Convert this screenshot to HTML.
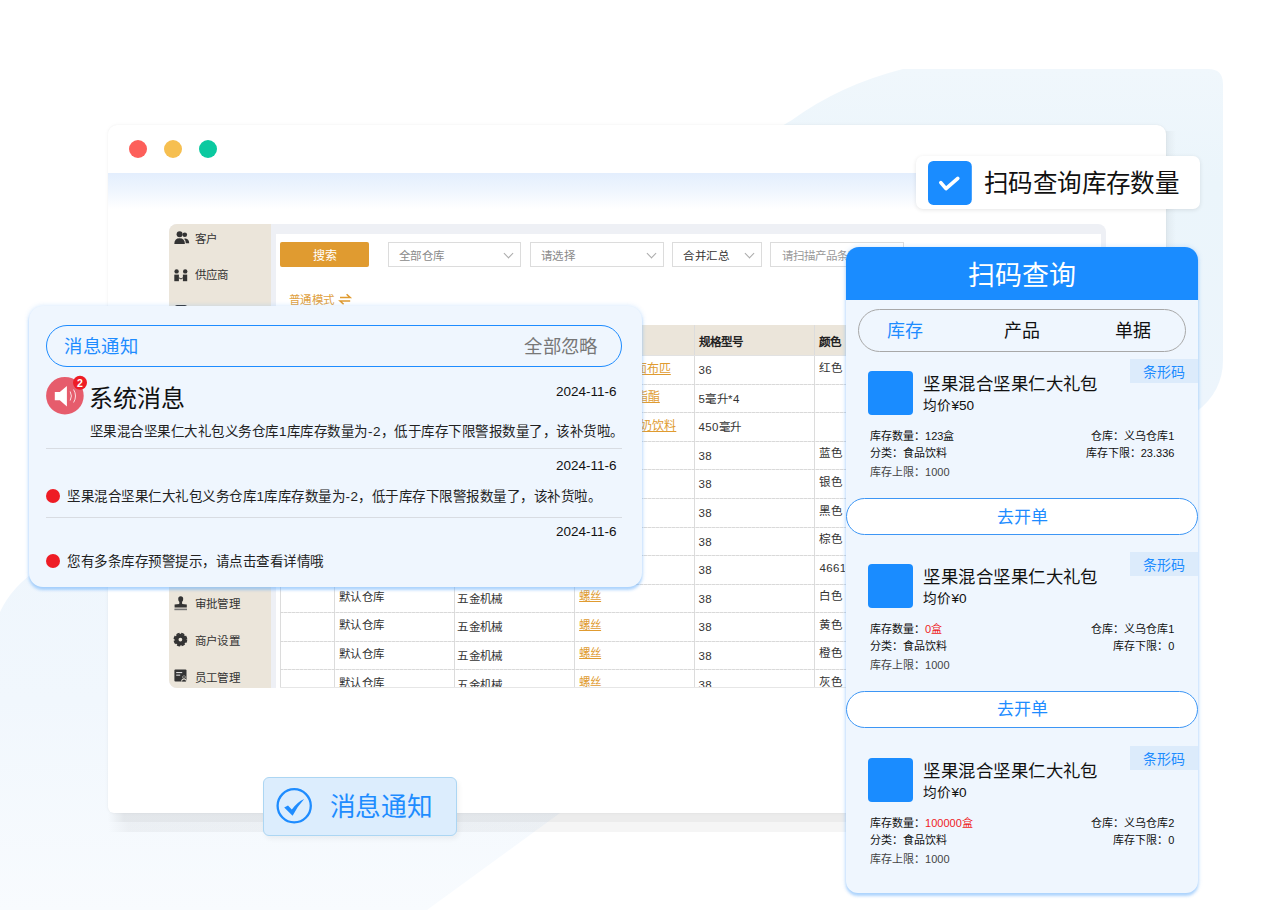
<!DOCTYPE html>
<html lang="zh-CN"><head><meta charset="utf-8">
<style>
*{box-sizing:border-box;margin:0;padding:0}
html,body{width:1262px;height:910px;overflow:hidden;background:#fff}
body{position:relative;font-family:"Liberation Sans",sans-serif;color:#222}
.a{position:absolute}
.t{position:absolute;white-space:nowrap;line-height:1}
.dd{position:absolute;top:242px;height:25px;border:1px solid #dcdcdc;background:#fff}
.chev{position:absolute;width:7px;height:7px;border-right:1px solid #aaa;border-bottom:1px solid #aaa;transform:rotate(45deg)}
</style></head><body>

<svg class="a" style="left:0;top:0" width="1262" height="910" viewBox="0 0 1262 910">
<defs>
<linearGradient id="bgg" x1="0" y1="0" x2="0" y2="910" gradientUnits="userSpaceOnUse">
<stop offset="0.075" stop-color="#f0f7fc"/><stop offset="0.2" stop-color="#ebf5fb"/><stop offset="0.45" stop-color="#edf5fc"/><stop offset="0.77" stop-color="#f1f7fd"/><stop offset="1" stop-color="#f8fbfe"/>
</linearGradient>
</defs>
<path d="M903 69 L1208 69 Q1223 69 1223 84 L1223 360 Q1223 392 1196 412 L560 813 L427 910 L0 910 L0 612 Q12 586 40 568 L792 120 Q840 85 903 69 Z" fill="url(#bgg)"/>
</svg>
<div class="a" style="left:108px;top:813px;width:1058px;height:9px;background:linear-gradient(to right,rgba(0,0,0,0),rgba(0,0,0,0.075) 16px)"></div>
<div class="a" style="left:108px;top:822px;width:1058px;height:10px;background:linear-gradient(to right,rgba(0,0,0,0),rgba(0,0,0,0.038) 20px)"></div>
<div class="a" style="left:1160px;top:131px;width:16px;height:682px;background:linear-gradient(to right,rgba(0,0,0,0.07),rgba(0,0,0,0.0))"></div>
<div class="a" style="left:108px;top:125px;width:1058px;height:688px;background:#fff;border-radius:9px 9px 6px 6px;box-shadow:0 0 1.5px rgba(0,0,0,0.06),0 0 4px rgba(0,0,0,0.04);overflow:hidden">
  <div class="a" style="left:0;top:48px;width:100%;height:36px;background:linear-gradient(#e3eefd,#eef5fe 45%,#fff)"></div>
  <div class="a" style="left:20.6px;top:14.8px;width:18px;height:18px;border-radius:50%;background:#fd5f5a"></div>
  <div class="a" style="left:55.9px;top:14.8px;width:18px;height:18px;border-radius:50%;background:#f6bf50"></div>
  <div class="a" style="left:91.1px;top:14.8px;width:18px;height:18px;border-radius:50%;background:#0bc9a0"></div>
</div>
<div class="a" style="left:169px;top:223.6px;width:937px;height:464px;background:#eef0f5;border-radius:8px 8px 0 8px"></div>
<div class="a" style="left:169px;top:223.6px;width:102.2px;height:464px;background:#ebe5da;border-radius:8px 0 0 8px"></div>
<div class="a" style="left:275.8px;top:234px;width:825px;height:453.5px;background:#fff"></div>
<div class="a" style="left:280.2px;top:242px;width:88.6px;height:25px;background:#e09b30;border-radius:2px"></div>
<div class="t" style="left:24.5px;width:600px;text-align:center;top:249.8px;font-size:12px;color:#fff;font-weight:normal;">搜索</div>
<div class="dd" style="left:387.6px;width:133.1px"></div>
<div class="chev" style="left:504.7px;top:250px"></div>
<div class="t" style="left:398.6px;top:250.6px;font-size:11.5px;color:#8a8a8a;font-weight:normal;letter-spacing:0.5px">全部仓库</div>
<div class="dd" style="left:529.8px;width:133.8px"></div>
<div class="chev" style="left:647.6px;top:250px"></div>
<div class="t" style="left:540.8px;top:250.6px;font-size:11.5px;color:#8a8a8a;font-weight:normal;letter-spacing:0.5px">请选择</div>
<div class="dd" style="left:672.4px;width:89.3px"></div>
<div class="chev" style="left:745.7px;top:250px"></div>
<div class="t" style="left:683.4px;top:250.6px;font-size:11.5px;color:#333;font-weight:normal;letter-spacing:0.5px">合并汇总</div>
<div class="dd" style="left:770px;width:133.6px"></div>
<div class="t" style="left:781.7px;top:250.6px;font-size:11.5px;color:#999;font-weight:normal;">请扫描产品条码</div>
<div class="t" style="left:289.0px;top:294.6px;font-size:11.5px;color:#e0a040;font-weight:normal;letter-spacing:0.4px">普通模式</div>
<svg class="a" style="left:336px;top:290px" width="20" height="20" viewBox="336 290 20 20"><path d="M340 297.6 L350.2 297.6 L346.6 294.3" stroke="#e09b30" stroke-width="1.5" fill="none" stroke-linejoin="miter"/><path d="M350.2 300.9 L340 300.9 L343.6 304.3" stroke="#e09b30" stroke-width="1.5" fill="none"/></svg>
<div class="a" style="left:280.4px;top:325.3px;width:600px;height:30.2px;background:#ebe5da"></div>
<div class="a" style="left:279.9px;top:325.3px;width:1px;height:362.2px;background:#dcdcdc"></div>
<div class="a" style="left:334.2px;top:325.3px;width:1px;height:362.2px;background:#dcdcdc"></div>
<div class="a" style="left:453.8px;top:325.3px;width:1px;height:362.2px;background:#dcdcdc"></div>
<div class="a" style="left:574.3px;top:325.3px;width:1px;height:362.2px;background:#dcdcdc"></div>
<div class="a" style="left:694.1px;top:325.3px;width:1px;height:362.2px;background:#dcdcdc"></div>
<div class="a" style="left:813.9px;top:325.3px;width:1px;height:362.2px;background:#dcdcdc"></div>
<div class="a" style="left:280.4px;top:383.6px;width:600px;height:1px;background:repeating-linear-gradient(90deg,#d9d9d9 0 3px,#e9e9e9 3px 4px)"></div>
<div class="a" style="left:280.4px;top:412.2px;width:600px;height:1px;background:repeating-linear-gradient(90deg,#d9d9d9 0 3px,#e9e9e9 3px 4px)"></div>
<div class="a" style="left:280.4px;top:440.7px;width:600px;height:1px;background:repeating-linear-gradient(90deg,#d9d9d9 0 3px,#e9e9e9 3px 4px)"></div>
<div class="a" style="left:280.4px;top:469.3px;width:600px;height:1px;background:repeating-linear-gradient(90deg,#d9d9d9 0 3px,#e9e9e9 3px 4px)"></div>
<div class="a" style="left:280.4px;top:497.9px;width:600px;height:1px;background:repeating-linear-gradient(90deg,#d9d9d9 0 3px,#e9e9e9 3px 4px)"></div>
<div class="a" style="left:280.4px;top:526.5px;width:600px;height:1px;background:repeating-linear-gradient(90deg,#d9d9d9 0 3px,#e9e9e9 3px 4px)"></div>
<div class="a" style="left:280.4px;top:555.1px;width:600px;height:1px;background:repeating-linear-gradient(90deg,#d9d9d9 0 3px,#e9e9e9 3px 4px)"></div>
<div class="a" style="left:280.4px;top:583.6px;width:600px;height:1px;background:repeating-linear-gradient(90deg,#d9d9d9 0 3px,#e9e9e9 3px 4px)"></div>
<div class="a" style="left:280.4px;top:612.2px;width:600px;height:1px;background:repeating-linear-gradient(90deg,#d9d9d9 0 3px,#e9e9e9 3px 4px)"></div>
<div class="a" style="left:280.4px;top:640.8px;width:600px;height:1px;background:repeating-linear-gradient(90deg,#d9d9d9 0 3px,#e9e9e9 3px 4px)"></div>
<div class="a" style="left:280.4px;top:669.4px;width:600px;height:1px;background:repeating-linear-gradient(90deg,#d9d9d9 0 3px,#e9e9e9 3px 4px)"></div>
<div class="a" style="left:280.4px;top:355.0px;width:600px;height:1px;background:#e2e2e2"></div>
<div class="a" style="left:280.4px;top:687px;width:825px;height:1px;background:#e6e6e6"></div>
<div class="t" style="left:698.5px;top:336.6px;font-size:11.5px;color:#222;font-weight:bold;">规格型号</div>
<div class="t" style="left:819.4px;top:336.6px;font-size:11.5px;color:#222;font-weight:bold;">颜色</div>
<div class="a" style="left:0;top:0;width:845px;height:687px;overflow:hidden">
<div class="t" style="left:698.5px;top:365.1px;font-size:11.5px;color:#333;font-weight:normal;letter-spacing:0.4px">36</div>
<div class="t" style="left:819.4px;top:362.6px;font-size:11.5px;color:#333;font-weight:normal;letter-spacing:0.4px">红色</div>
<div class="t" style="left:698.5px;top:393.7px;font-size:11.5px;color:#333;font-weight:normal;letter-spacing:0.4px">5毫升*4</div>
<div class="t" style="left:698.5px;top:422.3px;font-size:11.5px;color:#333;font-weight:normal;letter-spacing:0.4px">450毫升</div>
<div class="t" style="left:698.5px;top:450.8px;font-size:11.5px;color:#333;font-weight:normal;letter-spacing:0.4px">38</div>
<div class="t" style="left:819.4px;top:448.3px;font-size:11.5px;color:#333;font-weight:normal;letter-spacing:0.4px">蓝色</div>
<div class="t" style="left:698.5px;top:479.4px;font-size:11.5px;color:#333;font-weight:normal;letter-spacing:0.4px">38</div>
<div class="t" style="left:819.4px;top:476.9px;font-size:11.5px;color:#333;font-weight:normal;letter-spacing:0.4px">银色</div>
<div class="t" style="left:698.5px;top:508.0px;font-size:11.5px;color:#333;font-weight:normal;letter-spacing:0.4px">38</div>
<div class="t" style="left:819.4px;top:505.5px;font-size:11.5px;color:#333;font-weight:normal;letter-spacing:0.4px">黑色</div>
<div class="t" style="left:698.5px;top:536.6px;font-size:11.5px;color:#333;font-weight:normal;letter-spacing:0.4px">38</div>
<div class="t" style="left:819.4px;top:534.1px;font-size:11.5px;color:#333;font-weight:normal;letter-spacing:0.4px">棕色</div>
<div class="t" style="left:698.5px;top:565.2px;font-size:11.5px;color:#333;font-weight:normal;letter-spacing:0.4px">38</div>
<div class="t" style="left:819.4px;top:562.7px;font-size:11.5px;color:#333;font-weight:normal;letter-spacing:0.4px">4661</div>
<div class="t" style="left:338.8px;top:591.7px;font-size:11.5px;color:#333;font-weight:normal;letter-spacing:0.4px">默认仓库</div>
<div class="t" style="left:457.3px;top:593.7px;font-size:11.5px;color:#333;font-weight:normal;letter-spacing:0.4px">五金机械</div>
<div class="t" style="left:579.1px;top:591.2px;font-size:11.5px;color:#e09b30;font-weight:normal;text-decoration:underline">螺丝</div>
<div class="t" style="left:698.5px;top:593.7px;font-size:11.5px;color:#333;font-weight:normal;letter-spacing:0.4px">38</div>
<div class="t" style="left:819.4px;top:591.2px;font-size:11.5px;color:#333;font-weight:normal;letter-spacing:0.4px">白色</div>
<div class="t" style="left:338.8px;top:620.3px;font-size:11.5px;color:#333;font-weight:normal;letter-spacing:0.4px">默认仓库</div>
<div class="t" style="left:457.3px;top:622.3px;font-size:11.5px;color:#333;font-weight:normal;letter-spacing:0.4px">五金机械</div>
<div class="t" style="left:579.1px;top:619.8px;font-size:11.5px;color:#e09b30;font-weight:normal;text-decoration:underline">螺丝</div>
<div class="t" style="left:698.5px;top:622.3px;font-size:11.5px;color:#333;font-weight:normal;letter-spacing:0.4px">38</div>
<div class="t" style="left:819.4px;top:619.8px;font-size:11.5px;color:#333;font-weight:normal;letter-spacing:0.4px">黄色</div>
<div class="t" style="left:338.8px;top:648.9px;font-size:11.5px;color:#333;font-weight:normal;letter-spacing:0.4px">默认仓库</div>
<div class="t" style="left:457.3px;top:650.9px;font-size:11.5px;color:#333;font-weight:normal;letter-spacing:0.4px">五金机械</div>
<div class="t" style="left:579.1px;top:648.4px;font-size:11.5px;color:#e09b30;font-weight:normal;text-decoration:underline">螺丝</div>
<div class="t" style="left:698.5px;top:650.9px;font-size:11.5px;color:#333;font-weight:normal;letter-spacing:0.4px">38</div>
<div class="t" style="left:819.4px;top:648.4px;font-size:11.5px;color:#333;font-weight:normal;letter-spacing:0.4px">橙色</div>
<div class="t" style="left:338.8px;top:677.5px;font-size:11.5px;color:#333;font-weight:normal;letter-spacing:0.4px">默认仓库</div>
<div class="t" style="left:457.3px;top:679.5px;font-size:11.5px;color:#333;font-weight:normal;letter-spacing:0.4px">五金机械</div>
<div class="t" style="left:579.1px;top:677.0px;font-size:11.5px;color:#e09b30;font-weight:normal;text-decoration:underline">螺丝</div>
<div class="t" style="left:698.5px;top:679.5px;font-size:11.5px;color:#333;font-weight:normal;letter-spacing:0.4px">38</div>
<div class="t" style="left:819.4px;top:677.0px;font-size:11.5px;color:#333;font-weight:normal;letter-spacing:0.4px">灰色</div>
<div class="t" style="left:520.8px;width:150px;text-align:right;top:362.9px;font-size:12px;color:#e09b30;text-decoration:underline">涤纶面布匹</div>
<div class="t" style="left:509.8px;width:150px;text-align:right;top:391.4px;font-size:12px;color:#e09b30;text-decoration:underline">乙酸乙酯酯</div>
<div class="t" style="left:526.3px;width:150px;text-align:right;top:420.0px;font-size:12px;color:#e09b30;text-decoration:underline">纯牛奶饮料</div>
</div>
<svg class="a" style="left:172px;top:229.2px" width="20" height="20" viewBox="0 0 20 20"><circle cx="7.6" cy="5.2" r="3" fill="#333"/><path d="M2.3 15 Q2.3 9.2 7.6 9.2 Q12.9 9.2 12.9 15 Z" fill="#333"/><circle cx="12.8" cy="5.8" r="2.3" fill="#333"/><path d="M13.5 9.4 Q17.2 10 17.2 14.2 L13.8 14.2 Q13.8 11 12 9.8 Z" fill="#333"/></svg>
<div class="t" style="left:194.5px;top:233.8px;font-size:11.5px;color:#333;font-weight:normal;letter-spacing:0.4px">客户</div>
<svg class="a" style="left:172px;top:265.8px" width="20" height="20" viewBox="0 0 20 20"><circle cx="4.6" cy="5.4" r="2.2" fill="#333"/><circle cx="13.2" cy="5.4" r="2.2" fill="#333"/><rect x="2.3" y="8.6" width="4.6" height="6.6" fill="#333"/><rect x="10.9" y="8.6" width="4.3" height="6.6" fill="#333"/><path d="M6.9 11.8 L9 13 L10.9 11.8" stroke="#333" stroke-width="1" fill="none"/></svg>
<div class="t" style="left:194.5px;top:270.4px;font-size:11.5px;color:#333;font-weight:normal;letter-spacing:0.4px">供应商</div>
<div class="a" style="left:174.5px;top:304.5px;width:12px;height:13px;background:#333;border-radius:2px"></div>
<div class="t" style="left:194.5px;top:306.9px;font-size:11.5px;color:#333;font-weight:normal;letter-spacing:0.4px">销售单</div>
<div class="a" style="left:174.5px;top:341.1px;width:12px;height:13px;background:#333;border-radius:2px"></div>
<div class="t" style="left:194.5px;top:343.5px;font-size:11.5px;color:#333;font-weight:normal;letter-spacing:0.4px">采购单</div>
<div class="a" style="left:174.5px;top:377.6px;width:12px;height:13px;background:#333;border-radius:2px"></div>
<div class="t" style="left:194.5px;top:380.0px;font-size:11.5px;color:#333;font-weight:normal;letter-spacing:0.4px">库存</div>
<div class="a" style="left:174.5px;top:414.2px;width:12px;height:13px;background:#333;border-radius:2px"></div>
<div class="t" style="left:194.5px;top:416.6px;font-size:11.5px;color:#333;font-weight:normal;letter-spacing:0.4px">财务</div>
<div class="a" style="left:174.5px;top:450.8px;width:12px;height:13px;background:#333;border-radius:2px"></div>
<div class="t" style="left:194.5px;top:453.2px;font-size:11.5px;color:#333;font-weight:normal;letter-spacing:0.4px">报表</div>
<div class="a" style="left:174.5px;top:487.3px;width:12px;height:13px;background:#333;border-radius:2px"></div>
<div class="t" style="left:194.5px;top:489.7px;font-size:11.5px;color:#333;font-weight:normal;letter-spacing:0.4px">仓库</div>
<div class="a" style="left:174.5px;top:523.9px;width:12px;height:13px;background:#333;border-radius:2px"></div>
<div class="t" style="left:194.5px;top:526.3px;font-size:11.5px;color:#333;font-weight:normal;letter-spacing:0.4px">产品</div>
<div class="a" style="left:174.5px;top:560.4px;width:12px;height:13px;background:#333;border-radius:2px"></div>
<div class="t" style="left:194.5px;top:562.8px;font-size:11.5px;color:#333;font-weight:normal;letter-spacing:0.4px">统计</div>
<svg class="a" style="left:172px;top:594.8px" width="20" height="20" viewBox="0 0 20 20"><path d="M6.2 4 Q6.2 1.2 8.7 1.2 Q11.2 1.2 11.2 4 Q11.2 6 10 7 L10.2 9 L14.8 9.4 L14.8 12.6 L2.6 12.6 L2.6 9.4 L7.2 9 L7.4 7 Q6.2 6 6.2 4 Z" fill="#333"/><rect x="2.4" y="13.6" width="12.6" height="1.6" fill="#777"/></svg>
<div class="t" style="left:194.5px;top:599.4px;font-size:11.5px;color:#333;font-weight:normal;letter-spacing:0.4px">审批管理</div>
<svg class="a" style="left:172px;top:631.4px" width="20" height="20" viewBox="0 0 20 20"><circle cx="8.4" cy="8.6" r="3.9" fill="none" stroke="#333" stroke-width="4"/><circle cx="8.4" cy="8.6" r="6.1" fill="none" stroke="#333" stroke-width="1.6" stroke-dasharray="3.2 1.6"/></svg>
<div class="t" style="left:194.5px;top:636.0px;font-size:11.5px;color:#333;font-weight:normal;letter-spacing:0.4px">商户设置</div>
<svg class="a" style="left:172px;top:667.9px" width="20" height="20" viewBox="0 0 20 20"><rect x="2.4" y="1.5" width="12.1" height="12.1" rx="1" fill="#333"/><rect x="4.2" y="4" width="6" height="1.1" fill="#ddd"/><rect x="4.2" y="6.6" width="4" height="1.1" fill="#ddd"/><circle cx="12" cy="9" r="1.6" fill="#ebe5da"/><path d="M9.2 13.6 Q9.2 10.6 12 10.6 Q14.8 10.6 14.8 13.6 Z" fill="#ebe5da"/><circle cx="12" cy="9" r="1" fill="#333"/><path d="M10 13.6 Q10 11.4 12 11.4 Q14 11.4 14 13.6 Z" fill="#333"/></svg>
<div class="t" style="left:194.5px;top:672.5px;font-size:11.5px;color:#333;font-weight:normal;letter-spacing:0.4px">员工管理</div>
<div class="a" style="left:29px;top:306px;width:613px;height:281px;background:#eff6fe;border-radius:14px;box-shadow:0 3px 3px rgba(95,170,250,0.45),0 0 5px rgba(95,170,250,0.3)"></div>
<div class="a" style="left:46px;top:325px;width:575.7px;height:41.6px;border:1px solid #1e8cff;border-radius:21px"></div>
<div class="t" style="left:64.0px;top:338.2px;font-size:18.4px;color:#1e8cff;font-weight:normal;letter-spacing:0.5px">消息通知</div>
<div class="t" style="right:664.5px;top:338.2px;font-size:18.4px;color:#777;font-weight:normal;letter-spacing:0.3px">全部忽略</div>
<svg class="a" style="left:40px;top:370px" width="60" height="50" viewBox="40 370 60 50"><circle cx="64.9" cy="395.7" r="18.8" fill="#e65c6c"/><path d="M54.8 392 L59.8 392 L66.9 385.9 L66.9 406.5 L59.8 400.2 L54.8 400.2 Z" fill="#fff"/><path d="M70.2 391.5 Q72.6 396 70.2 400.5" stroke="#fff" stroke-width="0.8" fill="none"/><path d="M73.6 389.5 Q77.4 396 73.6 402.5" stroke="#fff" stroke-width="0.8" fill="none"/><circle cx="80" cy="382.8" r="7" fill="#ee1c25"/><text x="80" y="386.6" font-size="10.5" font-weight="bold" fill="#fff" text-anchor="middle" font-family="Liberation Sans">2</text></svg>
<div class="t" style="left:88.5px;top:386.5px;font-size:24px;color:#111;font-weight:normal;">系统消息</div>
<div class="t" style="right:645.5px;top:384.5px;font-size:13.5px;color:#111;font-weight:normal;line-height:1">2024-11-6</div>
<div class="t" style="right:645.5px;top:458.5px;font-size:13.5px;color:#111;font-weight:normal;line-height:1">2024-11-6</div>
<div class="t" style="right:645.5px;top:524.9px;font-size:13.5px;color:#111;font-weight:normal;line-height:1">2024-11-6</div>
<div class="t" style="left:89.9px;top:425.1px;font-size:13.5px;color:#222;font-weight:normal;letter-spacing:0.5px">坚果混合坚果仁大礼包义务仓库1库库存数量为-2，低于库存下限警报数量了，该补货啦。</div>
<div class="a" style="left:46px;top:448.3px;width:575.7px;height:1px;background:#d8dce2"></div>
<div class="a" style="left:46px;top:517.2px;width:575.7px;height:1px;background:#d8dce2"></div>
<div class="a" style="left:46px;top:488.7px;width:14px;height:14px;border-radius:50%;background:#ee1c25"></div>
<div class="t" style="left:67.4px;top:489.8px;font-size:13.5px;color:#222;font-weight:normal;letter-spacing:0.5px">坚果混合坚果仁大礼包义务仓库1库库存数量为-2，低于库存下限警报数量了，该补货啦。</div>
<div class="a" style="left:46px;top:553.6px;width:14px;height:14px;border-radius:50%;background:#ee1c25"></div>
<div class="t" style="left:67.4px;top:554.7px;font-size:13.5px;color:#222;font-weight:normal;letter-spacing:0.5px">您有多条库存预警提示，请点击查看详情哦</div>
<div class="a" style="left:916.2px;top:155.8px;width:283.8px;height:52.8px;background:#fff;border-radius:7px;box-shadow:0 1px 4px rgba(0,0,0,0.10)"></div>
<svg class="a" style="left:928px;top:160.6px" width="44" height="44" viewBox="928 160.6 44 44"><rect x="928" y="160.6" width="43.8" height="43.9" rx="5.4" fill="#1a8cff"/><polyline points="940.8,182.2 946,188.2 957.8,178" stroke="#fff" stroke-width="3.6" fill="none" stroke-linecap="round" stroke-linejoin="round"/></svg>
<div class="t" style="left:984.0px;top:172.4px;font-size:24.5px;color:#111;font-weight:normal;letter-spacing:0.4px">扫码查询库存数量</div>
<div class="a" style="left:846px;top:247px;width:351.7px;height:646px;background:#eff6fe;border-radius:13px 13px 12px 12px;box-shadow:0 3px 3px rgba(95,170,250,0.45),0 0 5px rgba(95,170,250,0.3);overflow:hidden"><div class="a" style="left:0;top:0;width:100%;height:53px;background:#1a8cff"></div></div>
<div class="t" style="left:721.8px;width:600px;text-align:center;top:262.9px;font-size:27px;color:#fff;font-weight:normal;">扫码查询</div>
<div class="a" style="left:857.9px;top:309px;width:328.1px;height:43.4px;border:1px solid #a8a8a8;border-radius:22px"></div>
<div class="t" style="left:887.0px;top:321.5px;font-size:18px;color:#1e8cff;font-weight:normal;">库存</div>
<div class="t" style="left:1004.0px;top:321.5px;font-size:18px;color:#111;font-weight:normal;">产品</div>
<div class="t" style="left:1115.0px;top:321.5px;font-size:18px;color:#111;font-weight:normal;">单据</div>
<div class="a" style="left:1130.2px;top:358.6px;width:67.5px;height:24.2px;background:#dcebfb"></div>
<div class="t" style="left:1143.0px;top:364.8px;font-size:14px;color:#1e8cff;font-weight:normal;">条形码</div>
<div class="a" style="left:868.4px;top:370.8px;width:44.2px;height:44.2px;background:#1a8cff;border-radius:4px"></div>
<div class="t" style="left:923.4px;top:376.0px;font-size:17.4px;color:#111;font-weight:normal;letter-spacing:0.45px">坚果混合坚果仁大礼包</div>
<div class="t" style="left:923.4px;top:398.9px;font-size:13.6px;color:#111;font-weight:normal;">均价¥50</div>
<div class="t" style="left:870.1px;top:430.9px;font-size:11px;color:#111;font-weight:normal;">库存数量：<span style="color:#111">123盒</span></div>
<div class="t" style="left:870.1px;top:448.0px;font-size:11px;color:#111;font-weight:normal;">分类：食品饮料</div>
<div class="t" style="left:870.1px;top:466.5px;font-size:11px;color:#444;font-weight:normal;">库存上限：1000</div>
<div class="t" style="right:87.6px;top:430.9px;font-size:11px;color:#111;font-weight:normal;">仓库：义乌仓库1</div>
<div class="t" style="right:87.6px;top:448.0px;font-size:11px;color:#111;font-weight:normal;">库存下限：23.336</div>
<div class="a" style="left:846.4px;top:498.3px;width:351.4px;height:37.1px;background:#fff;border:1px solid #3d96f5;border-radius:19px"></div>
<div class="t" style="left:722.0px;width:600px;text-align:center;top:508.9px;font-size:17px;color:#1e8cff;font-weight:normal;">去开单</div>
<div class="a" style="left:1130.2px;top:551.9px;width:67.5px;height:24.2px;background:#dcebfb"></div>
<div class="t" style="left:1143.0px;top:558.1px;font-size:14px;color:#1e8cff;font-weight:normal;">条形码</div>
<div class="a" style="left:868.4px;top:564.1px;width:44.2px;height:44.2px;background:#1a8cff;border-radius:4px"></div>
<div class="t" style="left:923.4px;top:569.3px;font-size:17.4px;color:#111;font-weight:normal;letter-spacing:0.45px">坚果混合坚果仁大礼包</div>
<div class="t" style="left:923.4px;top:592.2px;font-size:13.6px;color:#111;font-weight:normal;">均价¥0</div>
<div class="t" style="left:870.1px;top:624.2px;font-size:11px;color:#111;font-weight:normal;">库存数量：<span style="color:#ee1c25">0盒</span></div>
<div class="t" style="left:870.1px;top:641.3px;font-size:11px;color:#111;font-weight:normal;">分类：食品饮料</div>
<div class="t" style="left:870.1px;top:659.8px;font-size:11px;color:#444;font-weight:normal;">库存上限：1000</div>
<div class="t" style="right:87.6px;top:624.2px;font-size:11px;color:#111;font-weight:normal;">仓库：义乌仓库1</div>
<div class="t" style="right:87.6px;top:641.3px;font-size:11px;color:#111;font-weight:normal;">库存下限：0</div>
<div class="a" style="left:846.4px;top:690.6px;width:351.4px;height:37.1px;background:#fff;border:1px solid #3d96f5;border-radius:19px"></div>
<div class="t" style="left:722.0px;width:600px;text-align:center;top:701.2px;font-size:17px;color:#1e8cff;font-weight:normal;">去开单</div>
<div class="a" style="left:1130.2px;top:745.9px;width:67.5px;height:24.2px;background:#dcebfb"></div>
<div class="t" style="left:1143.0px;top:752.1px;font-size:14px;color:#1e8cff;font-weight:normal;">条形码</div>
<div class="a" style="left:868.4px;top:758.1px;width:44.2px;height:44.2px;background:#1a8cff;border-radius:4px"></div>
<div class="t" style="left:923.4px;top:763.3px;font-size:17.4px;color:#111;font-weight:normal;letter-spacing:0.45px">坚果混合坚果仁大礼包</div>
<div class="t" style="left:923.4px;top:786.2px;font-size:13.6px;color:#111;font-weight:normal;">均价¥0</div>
<div class="t" style="left:870.1px;top:818.2px;font-size:11px;color:#111;font-weight:normal;">库存数量：<span style="color:#ee1c25">100000盒</span></div>
<div class="t" style="left:870.1px;top:835.3px;font-size:11px;color:#111;font-weight:normal;">分类：食品饮料</div>
<div class="t" style="left:870.1px;top:853.8px;font-size:11px;color:#444;font-weight:normal;">库存上限：1000</div>
<div class="t" style="right:87.6px;top:818.2px;font-size:11px;color:#111;font-weight:normal;">仓库：义乌仓库2</div>
<div class="t" style="right:87.6px;top:835.3px;font-size:11px;color:#111;font-weight:normal;">库存下限：0</div>
<div class="a" style="left:263.2px;top:777.2px;width:193.8px;height:58.8px;background:#dcedfd;border:1px solid #acd6f3;border-radius:6px;box-shadow:2px 3px 5px rgba(0,0,0,0.05)"></div>
<svg class="a" style="left:270px;top:782px" width="50" height="50" viewBox="270 782 50 50"><circle cx="294.2" cy="805.8" r="16.6" stroke="#1e8cff" stroke-width="2.3" fill="none"/><path d="M284.2 807.4 L288 805.4 L291.8 809.6 Q297 802 304.2 798.9 Q297.5 806 292.6 815.8 Z" fill="#1e8cff"/></svg>
<div class="t" style="left:329.5px;top:795.1px;font-size:25.7px;color:#1e8cff;font-weight:normal;letter-spacing:-0.3px">消息通知</div>
</body></html>
